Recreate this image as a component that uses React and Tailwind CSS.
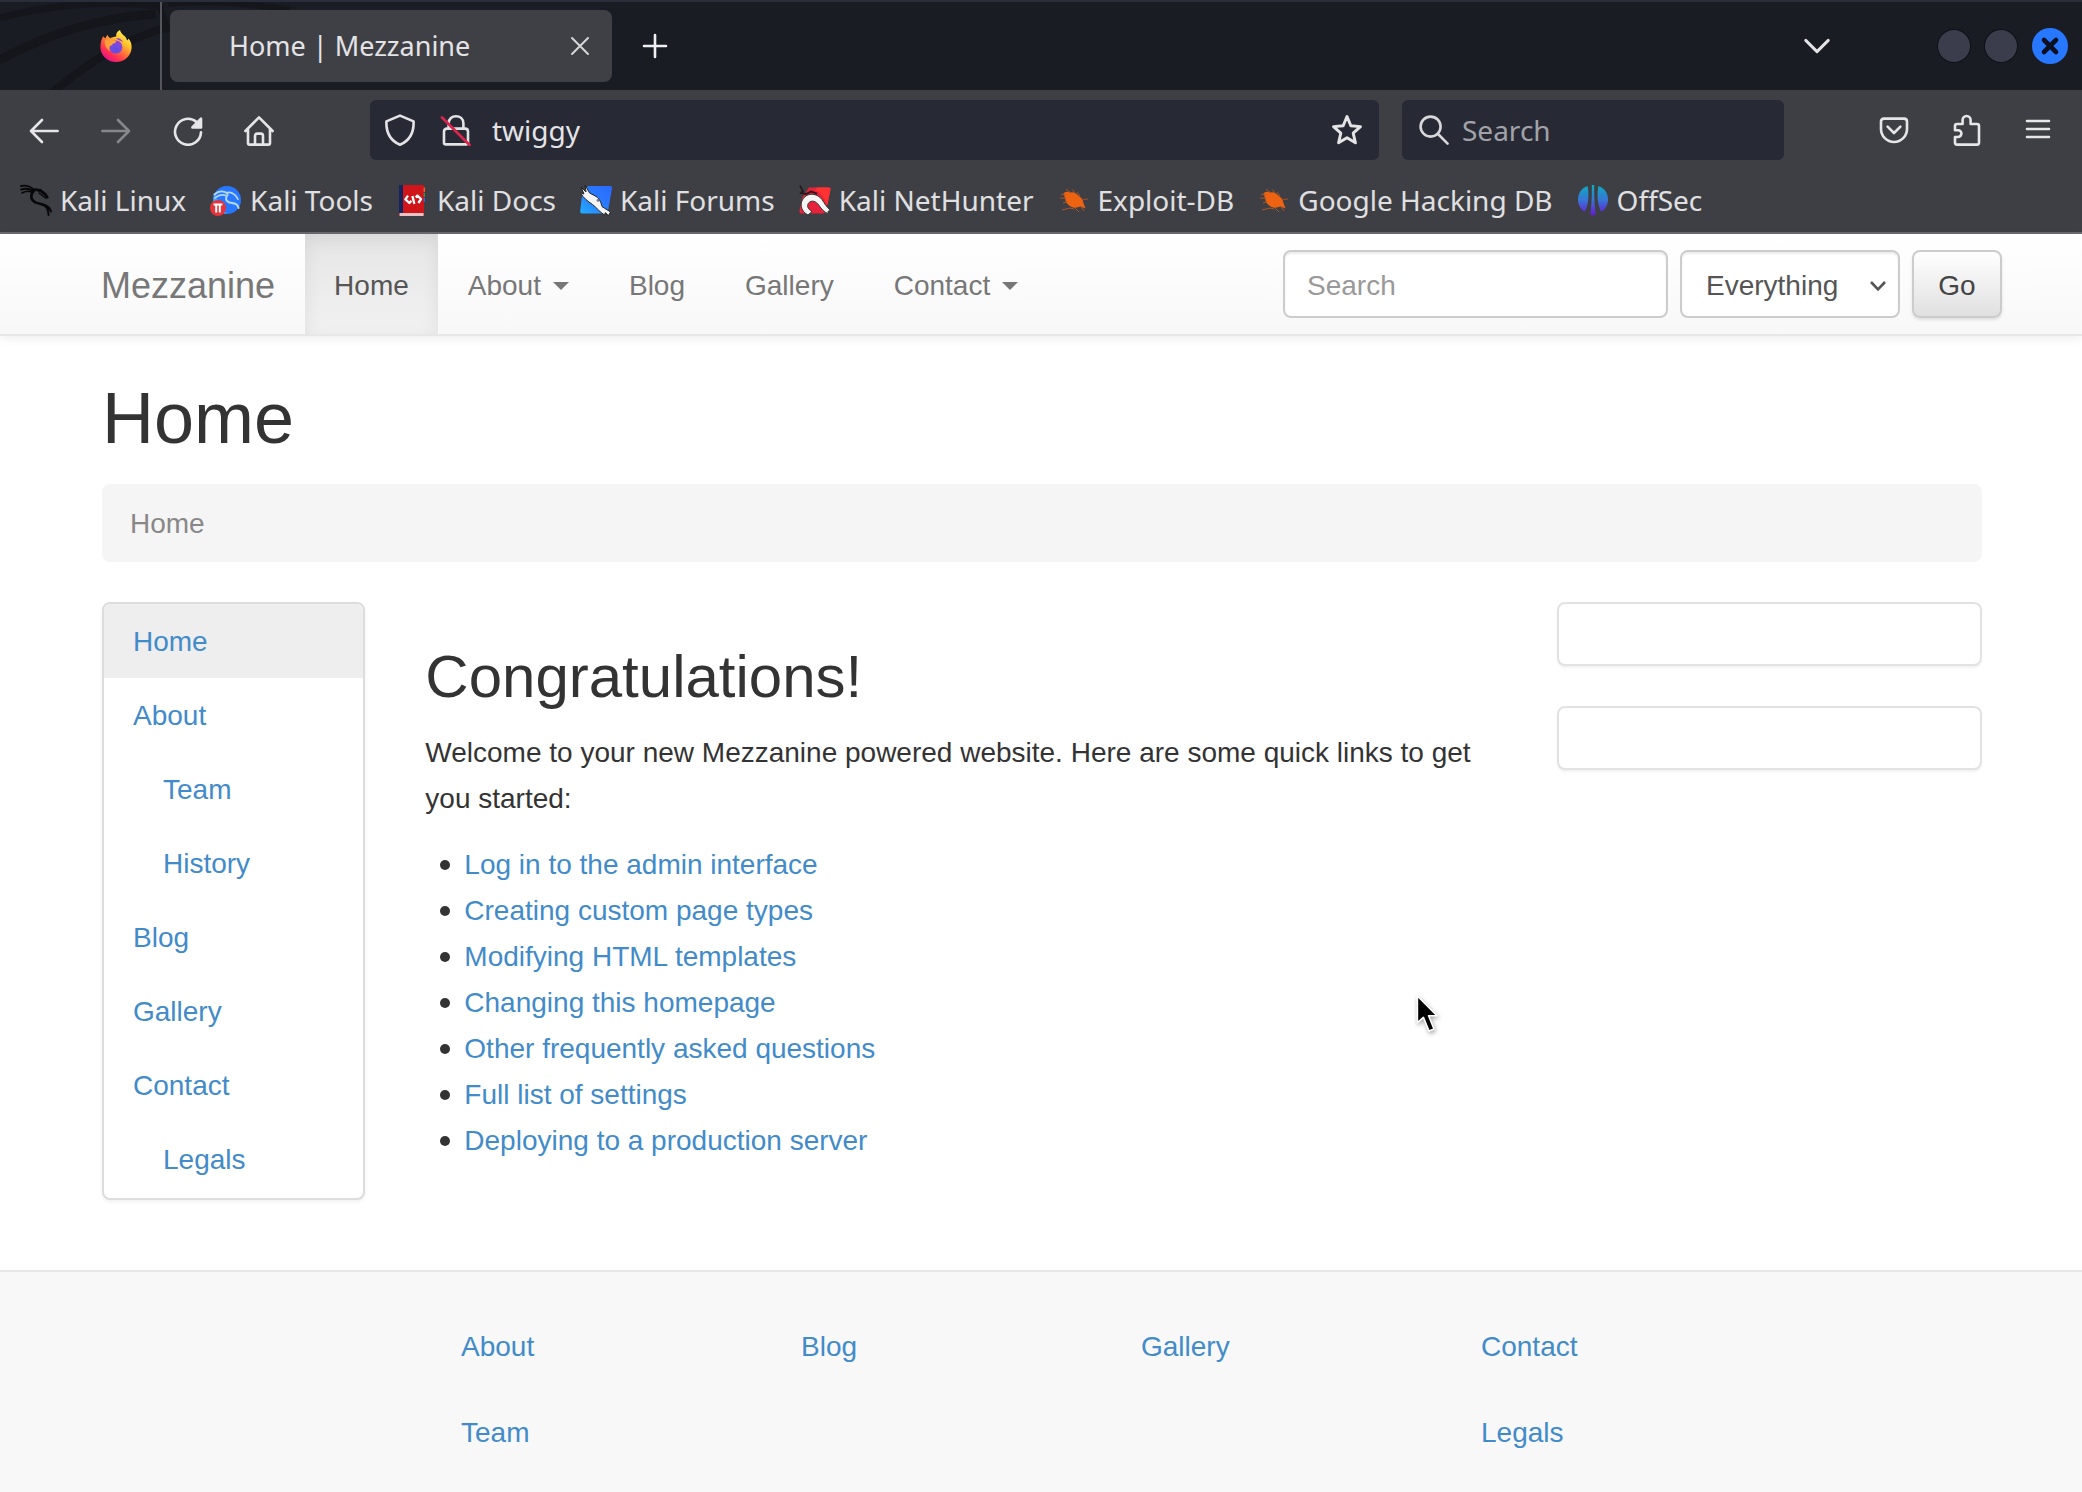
import React from "react";

const strokeProps = {
  fill: "none",
  stroke: "currentColor",
  strokeWidth: 2.6,
  strokeLinecap: "round",
  strokeLinejoin: "round",
};

function Icon({ children, className = "size-8", ...rest }) {
  return (
    <svg viewBox="0 0 32 32" className={className} aria-hidden="true" {...strokeProps} {...rest}>
      {children}
    </svg>
  );
}

function FirefoxLogo() {
  return (
    <svg viewBox="0 0 32 32" className="size-8" aria-hidden="true">
      <defs>
        <linearGradient id="fxBody" x1="0.85" y1="0.1" x2="0.25" y2="0.95">
          <stop offset="0" stopColor="#fff44f" />
          <stop offset="0.3" stopColor="#ffc22e" />
          <stop offset="0.55" stopColor="#ff7139" />
          <stop offset="0.8" stopColor="#ff2f55" />
          <stop offset="1" stopColor="#e5158a" />
        </linearGradient>
        <radialGradient id="fxCore" cx="0.5" cy="0.7" r="0.7">
          <stop offset="0" stopColor="#5b4fe0" />
          <stop offset="0.6" stopColor="#7a4be0" />
          <stop offset="1" stopColor="#a63ad0" />
        </radialGradient>
        <linearGradient id="fxHead" x1="0" y1="0" x2="1" y2="1">
          <stop offset="0" stopColor="#ff9640" />
          <stop offset="1" stopColor="#ffb02e" />
        </linearGradient>
      </defs>
      <path
        d="M3.2 6.2C3.8 7.2 4.6 7.8 5.6 8.2C6 6.8 6.8 5.6 7.8 5C8 6.4 8.8 7.4 10.2 8C12.5 7 14.6 6.8 16.2 6.4C15.8 3.8 17 1.6 20 0C20.4 2.6 22.6 4.4 25 6.4C26.2 7.6 26.8 9 27 10.4C27.8 10.2 28.2 9.4 28.4 8.6C30.6 11.2 32 14.4 31.6 18C31 26 24.4 32 16 32C7.4 32 .6 25.6 .4 17.2C.4 13.4 1.2 9.4 3.2 6.2Z"
        fill="url(#fxBody)"
      />
      <circle cx="15.8" cy="17" r="6.6" fill="url(#fxCore)" />
      <path
        d="M5 9.4C7.2 8.4 10.2 8.6 12.2 10.2C13.8 10.2 15.4 10.6 16.2 11.4C15.8 12.8 14 13.4 12.8 13.8C12.2 15 11.2 15.6 10 16C9 17.2 9 19.2 10.2 21C6.2 19 3.8 14 5 9.4Z"
        fill="url(#fxHead)"
      />
      <path d="M16 8.6C19 7.4 22 9.4 23 12.2C20.6 10.6 18 10.4 16 8.6Z" fill="#8f3fd6" />
    </svg>
  );
}

function DragonShape({ color }) {
  return (
    <g fill="none" stroke={color} strokeLinecap="round" strokeLinejoin="round">
      <path d="M1 2C6 1 10 2 14 6" strokeWidth="1.8" />
      <path d="M1 5.6C6 4 10 4.6 13 7.6" strokeWidth="1.8" />
      <path d="M2 9C6 6.6 10 7 13 9" strokeWidth="1.6" />
      <path d="M13 6C18 4.6 23 8 27 12.6" strokeWidth="2.6" />
      <path d="M20 5.4L26.4 10.4M19 9L25.6 14L28 13.4" strokeWidth="1.5" />
      <path d="M13.6 7.4C10 10.6 10.6 16 15.4 18.4C20.6 20.8 26.6 19.6 29.4 25" strokeWidth="2.6" />
      <path d="M22 20.6C26.4 21.6 28.4 26 28.6 31M28.8 23.6L31 27.4" strokeWidth="2" />
    </g>
  );
}

function KaliLinuxIcon() {
  return (
    <svg viewBox="0 0 32 32" className="size-8" aria-hidden="true">
      <DragonShape color="#08080a" />
    </svg>
  );
}

function KaliToolsIcon() {
  return (
    <svg viewBox="0 0 32 32" className="size-8" aria-hidden="true">
      <circle cx="17" cy="16" r="14" fill="#2777ff" />
      <path d="M5 9A14 14 0 0 0 17 30C12 25 8 18 5 9Z" fill="#3fa2f5" />
      <g fill="none" stroke="#b4d6fb" strokeLinecap="round">
        <path d="M4.4 10.4C9 6.4 14 6.8 17.4 9.6" strokeWidth="2" />
        <path d="M4.8 14C9 10.6 13 10.4 16 11.6" strokeWidth="1.6" />
        <path d="M17 8.6C22 7.4 26 11.4 28 15.4" strokeWidth="1.6" />
        <path d="M17.6 11C14 15.6 17.4 18.6 22 19C26 19.4 28 21 28.6 24" strokeWidth="2" />
      </g>
      <circle cx="8" cy="24" r="8" fill="#e5343c" />
      <path d="M3.6 20.6H12.4M6.2 21V28.6M9.8 21V28.6" fill="none" stroke="#fff" strokeWidth="2" />
    </svg>
  );
}

function KaliDocsIcon() {
  return (
    <svg viewBox="0 0 32 32" className="size-8" aria-hidden="true">
      <rect x="2" y="1" width="25" height="31" rx="1" fill="#cf1519" />
      <rect x="2" y="1" width="4" height="28" fill="#14245c" />
      <rect x="2.6" y="29" width="24" height="3" fill="#e9c3c3" />
      <path d="M26.6 3.6H28V8H26.6Z" fill="#e8642b" />
      <path d="M26.6 9H28V13H26.6Z" fill="#3b8f4a" />
      <path d="M26.6 14H28V18H26.6Z" fill="#2b6be0" />
      <path
        d="M11 11.6L8.4 15.4L12.4 19L14.4 16.8M15.4 12L17.4 20M18.6 13.4L20.4 11.6L24 15L21.4 19"
        fill="none"
        stroke="#fff"
        strokeWidth="2.3"
        strokeLinejoin="round"
      />
    </svg>
  );
}

function KaliForumsIcon() {
  return (
    <svg viewBox="0 0 32 32" className="size-8" aria-hidden="true">
      <defs>
        <linearGradient id="forumFill" x1="1" y1="0" x2="0" y2="1">
          <stop offset="0" stopColor="#2a68ff" />
          <stop offset="0.5" stopColor="#2a7cff" />
          <stop offset="1" stopColor="#23adff" />
        </linearGradient>
      </defs>
      <path d="M8 2H30Q32.4 2 32 4.4L28 27Q27.6 29.4 25 29.4H2Q0 29.4 .2 27L2 12Z" fill="url(#forumFill)" />
      <path
        d="M1 3L6 8L5 1L9.6 9L16 12.4C20 15 21 19 22 22.6L30.6 28L28.4 31.6L25.4 28.6L24.6 31C20 28.4 17 24 12.4 20.4C8 17.4 3 14 .6 8.6L4 10Z"
        fill="#f5f5f5"
        stroke="#222"
        strokeWidth="1"
      />
      <circle cx="18" cy="16.4" r="1.4" fill="#777" />
    </svg>
  );
}

function NetHunterIcon() {
  return (
    <svg viewBox="0 0 32 32" className="size-8" aria-hidden="true">
      <path d="M10 3.4H30Q32 3.4 31.4 5.8L27 27Q26.4 29.4 24 29.4H2Q0 29.4 .4 27L3 14Z" fill="#e8223a" />
      <path d="M18 3.4H30Q32 3.4 31.4 5.8L28.4 21C25 13 21 8 16 6Z" fill="#ff3232" />
      <path
        d="M9 31C1 27 0 18 6 12.6C11 8.4 19 10 23 15.6C25.4 19 27 22.6 31.4 26.4L29 27.4L29.4 29.6C25 28.4 22.6 25 20 21.4C17 17 12.6 16 10 18.6C7.6 21 8.4 25 13 27.6Z"
        fill="#f5f5f5"
        stroke="#333"
        strokeWidth="1"
      />
      <path d="M1 1.6L4 7L2 9L7 10L12 7.4L18 9.6" fill="none" stroke="#26181c" strokeWidth="1.8" />
    </svg>
  );
}

function ExploitIcon() {
  return (
    <svg viewBox="0 0 32 32" className="size-8" aria-hidden="true">
      <path
        d="M5.4 9.6C8 7 10.6 8 12 8.4C15.4 7.6 19.4 10 21.4 12.6C24 14 25 16.6 25.4 19L27.6 24.6L22.6 22.6C19 24 15 24.4 12 22C9 20.4 7.4 17.6 7 14Z"
        fill="#ee6311"
      />
      <path
        d="M8 5L13 9M14 5.4L18 10M19 8L22 12M25 15.4L30 15M2 14L8 14.4M3 10.6L8 11M5 19L9 18M4 26L12 24L16 25M17 24L21 28M23 22.6L26 27"
        fill="none"
        stroke="#a9552a"
        strokeWidth="1"
      />
    </svg>
  );
}

function OffSecIcon() {
  return (
    <svg viewBox="0 0 32 32" className="size-8" aria-hidden="true">
      <defs>
        <linearGradient id="offsecFill" gradientUnits="userSpaceOnUse" x1="16" y1="0" x2="16" y2="32">
          <stop offset="0" stopColor="#0bb0bd" />
          <stop offset="0.5" stopColor="#3776d6" />
          <stop offset="1" stopColor="#6a14d8" />
        </linearGradient>
      </defs>
      <g fill="url(#offsecFill)">
        <path d="M10.6 2C4 4 1 10 1 15.6C1 21 3.6 25.4 7.6 27.8C11.4 22 12.4 11 10.6 2Z" />
        <path d="M21.4 2C28 4 31 10 31 15.6C31 21 28.4 25.4 24.4 27.8C20.6 22 19.6 11 21.4 2Z" />
        <path d="M14.8 1H17.2C17 12 17.6 22 18.6 30Q16 33 13.4 30C14.4 22 15 12 14.8 1Z" />
      </g>
    </svg>
  );
}

const bookmarks = [
  ["Kali Linux", KaliLinuxIcon],
  ["Kali Tools", KaliToolsIcon],
  ["Kali Docs", KaliDocsIcon],
  ["Kali Forums", KaliForumsIcon],
  ["Kali NetHunter", NetHunterIcon],
  ["Exploit-DB", ExploitIcon],
  ["Google Hacking DB", ExploitIcon],
  ["OffSec", OffSecIcon],
];

function TabBar() {
  return (
    <div className="relative flex h-[90px] items-stretch border-t-2 border-[#2a2d3a] bg-[#1a1c24]">
      <svg
        viewBox="0 0 300 88"
        className="pointer-events-none absolute left-0 top-0 h-full w-[300px]"
        fill="none"
        stroke="#15161b"
        aria-hidden="true"
      >
        <path d="M0 16C50 2 110 -2 160 4" strokeWidth="7" />
        <path d="M-4 60C50 30 100 16 156 12" strokeWidth="9" />
        <path d="M50 92C90 60 120 40 164 26" strokeWidth="8" />
        <path d="M168 2C200 -2 240 0 290 8" strokeWidth="6" />
        <path d="M160 4L168 30" strokeWidth="6" />
      </svg>
      <div className="relative flex w-[162px] items-center justify-end border-r-2 border-[#55565b] pr-7">
        <button aria-label="Firefox View">
          <FirefoxLogo />
        </button>
      </div>
      <div className="relative my-2 ml-2 flex w-[442px] items-center justify-between rounded-lg bg-[#3f4045] pl-[59px] pr-4">
        <span className="text-[27px] leading-9 text-[#e4e4e6]">Home | Mezzanine</span>
        <button aria-label="Close tab" className="text-[#d6d6d8]">
          <Icon strokeWidth="2">
            <path d="M8 8L24 24M24 8L8 24" />
          </Icon>
        </button>
      </div>
      <button aria-label="New tab" className="relative flex w-[86px] items-center justify-center text-[#f0f0f2]">
        <Icon>
          <path d="M16 5V27M5 16H27" />
        </Icon>
      </button>
      <div className="ml-auto flex items-center gap-[15px] pr-[14px]">
        <button aria-label="List all tabs" className="mr-[88px] text-[#e4e4e6]">
          <Icon className="size-9">
            <path d="M6 11L16 21L26 11" />
          </Icon>
        </button>
        <button aria-label="Minimize" className="size-8 rounded-full bg-[#3b3d4c] ring-1 ring-[#101116]" />
        <button aria-label="Maximize" className="size-8 rounded-full bg-[#3b3d4c] ring-1 ring-[#101116]" />
        <button
          aria-label="Close window"
          className="flex size-9 items-center justify-center rounded-full bg-[#2777ff] text-[#0b1020]"
        >
          <Icon strokeWidth="4.6">
            <path d="M10 10L22 22M22 10L10 22" />
          </Icon>
        </button>
      </div>
    </div>
  );
}

function ToolButton({ label, dim, children }) {
  return (
    <button
      aria-label={label}
      className={
        dim
          ? "flex h-14 w-[72px] items-center justify-center text-[#86878b]"
          : "flex h-14 w-[72px] items-center justify-center text-[#e6e6e8]"
      }
    >
      <Icon>{children}</Icon>
    </button>
  );
}

function ToolBar() {
  return (
    <div className="flex items-center bg-[#3e3f44] px-2 pt-[10px]">
      <ToolButton label="Back">
        <path d="M29.6 17H3M14 6L3 17L14 28" />
      </ToolButton>
      <ToolButton label="Forward" dim>
        <path d="M2.4 17H29M18 6L29 17L18 28" />
      </ToolButton>
      <ToolButton label="Reload">
        <path d="M29 18.4A13 13 0 1 1 24.6 8" />
        <path d="M29 4.6V13.4H20.4Z" fill="currentColor" />
      </ToolButton>
      <ToolButton label="Home">
        <path d="M1.4 17L15 3.4L28.6 17M4 15V29Q4 30.6 5.6 30.6H24.4Q26 30.6 26 29V15" />
        <path d="M11 30V22Q11 19.6 13 19.6H17Q19 19.6 19 22V30" />
      </ToolButton>
      <div className="ml-[74px] flex h-[60px] flex-1 items-center rounded-md bg-[#272935] pl-[14px] pr-[14px] text-[#e4e4e6]">
        <Icon>
          <path d="M16 1.6L29.6 7.4C30 18 25.6 26.6 16 30.8C6.4 26.6 2 18 2.4 7.4Z" />
        </Icon>
        <Icon className="ml-6 size-8">
          <path d="M8.6 14V9.4C8.6 -.2 23.4 -.2 23.4 9.4V14M4 29V17.6Q4 14.6 7 14.6H25Q28 14.6 28 17.6V29Q28 30.4 26 30.4H6Q4 30.4 4 29Z" />
          <path d="M2 3.6L29.6 31" stroke="#d7264c" strokeWidth="2.8" />
        </Icon>
        <input
          aria-label="Address"
          defaultValue="twiggy"
          className="ml-5 min-w-0 flex-1 bg-transparent text-[28px] leading-9 outline-none"
        />
        <button aria-label="Bookmark this page">
          <Icon className="size-9">
            <path d="M16 4L19.4 12.2L28 13L21.5 18.8L23.5 27.4L16 22.9L8.5 27.4L10.5 18.8L4 13L12.6 12.2Z" />
          </Icon>
        </button>
      </div>
      <label className="ml-[23px] flex h-[60px] w-[382px] items-center rounded-md bg-[#272935] px-4 text-[#d8d8da]">
        <Icon>
          <circle cx="12.6" cy="12.6" r="10" />
          <path d="M20 20L29.6 29.6" />
        </Icon>
        <input
          aria-label="Search the web"
          placeholder="Search"
          className="ml-3 min-w-0 flex-1 bg-transparent text-[28px] leading-9 outline-none placeholder:text-[#a2a3a9]"
        />
      </label>
      <div className="ml-[74px] flex">
        <ToolButton label="Save to Pocket">
          <path d="M6 4.6H26Q29 4.6 29 7.6V15A13 13 0 0 1 3 15V7.6Q3 4.6 6 4.6ZM9.6 12.6L16 19L22.4 12.6" />
        </ToolButton>
        <ToolButton label="Extensions">
          <path d="M12.6 10V6A4 4 0 0 1 20.6 6V10H27Q29 10 29 12V28.8Q29 30.6 27 30.6H7Q5 30.6 5 28.8V23H8A3.4 3.4 0 0 0 8 16.2H5V12Q5 10 7 10Z" />
        </ToolButton>
        <ToolButton label="Application menu">
          <path d="M5 7H27M5 15H27M5 23H27" />
        </ToolButton>
      </div>
    </div>
  );
}

function BookmarksBar() {
  return (
    <nav
      aria-label="Bookmarks"
      className="flex h-[74px] items-center gap-6 border-b-2 border-[#6a6b70] bg-[#3e3f44] px-5 pt-2"
    >
      {bookmarks.map(([name, Logo]) => (
        <a key={name} href="#" className="flex items-center gap-2 whitespace-nowrap text-[28px] leading-9 text-[#e0e0e2]">
          <Logo />
          {name}
        </a>
      ))}
    </nav>
  );
}

function Caret() {
  return <span className="ml-3 border-x-8 border-t-8 border-x-transparent border-t-[#777]" />;
}

const navItems = [
  ["Home", false],
  ["About", true],
  ["Blog", false],
  ["Gallery", false],
  ["Contact", true],
];

function SiteNav() {
  return (
    <header className="flex h-[102px] items-stretch border-b-2 border-[#e7e7e7] bg-linear-to-b from-white to-[#f8f8f8] pl-[101px] pr-20 shadow-[0_2px_10px_rgba(0,0,0,0.08)]">
      <a href="#" className="mr-[30px] flex items-center pt-1 text-[36px] leading-10 text-[#777]">
        Mezzanine
      </a>
      <nav aria-label="Main" className="flex">
        {navItems.map(([name, menu]) => (
          <a
            key={name}
            href="#"
            className={
              name === "Home"
                ? "flex items-center bg-linear-to-b from-[#e6e6e6] to-[#f1f1f1] px-[29px] pt-1 text-[#555] shadow-[inset_0_6px_18px_rgba(0,0,0,0.075)]"
                : "flex items-center px-[30px] pt-1 text-[#777]"
            }
          >
            {name}
            {menu && <Caret />}
          </a>
        ))}
      </nav>
      <form className="ml-auto flex items-center gap-3" onSubmit={(e) => e.preventDefault()}>
        <input
          type="text"
          aria-label="Search the site"
          placeholder="Search"
          className="h-[68px] w-[385px] rounded-lg border-2 border-[#ccc] bg-white px-[22px] pt-1 shadow-[inset_0_2px_2px_rgba(0,0,0,0.075)] placeholder:text-[#999]"
        />
        <span className="relative flex">
          <select
            aria-label="Search in"
            className="h-[68px] w-[220px] appearance-none rounded-lg border-2 border-[#ccc] bg-white pl-6 pr-10 pt-1 text-[#555] shadow-[inset_0_2px_2px_rgba(0,0,0,0.075)]"
          >
            <option>Everything</option>
          </select>
          <svg
            viewBox="0 0 16 16"
            className="pointer-events-none absolute right-[14px] top-7 size-4"
            fill="none"
            stroke="#555"
            strokeWidth="2.6"
            aria-hidden="true"
          >
            <path d="M1 4L8 11.4L15 4" />
          </svg>
        </span>
        <button className="h-[68px] w-[90px] rounded-lg border-2 border-[#ccc] bg-linear-to-b from-white to-[#e0e0e0] pt-1 text-[#444] shadow-[0_2px_3px_rgba(0,0,0,0.1)]">
          Go
        </button>
      </form>
    </header>
  );
}

const tree = [
  ["Home", 0],
  ["About", 0],
  ["Team", 1],
  ["History", 1],
  ["Blog", 0],
  ["Gallery", 0],
  ["Contact", 0],
  ["Legals", 1],
];

const quickLinks = [
  "Log in to the admin interface",
  "Creating custom page types",
  "Modifying HTML templates",
  "Changing this homepage",
  "Other frequently asked questions",
  "Full list of settings",
  "Deploying to a production server",
];

function treeClass(name, depth) {
  if (name === "Home") return "flex h-[74px] items-center bg-[#eee] pl-[29px] pt-0.5";
  return depth ? "flex h-[74px] items-center pl-[59px] pt-0.5" : "flex h-[74px] items-center pl-[29px] pt-0.5";
}

function Content() {
  return (
    <main className="pl-[102px] pr-[100px] pt-[42px]">
      <h1 className="text-[72px] leading-[80px]">Home</h1>
      <ol className="mt-[26px] flex h-[78px] items-center rounded-lg bg-[#f5f5f5] px-7 pt-0.5 text-[#888]">
        <li>Home</li>
      </ol>
      <div className="mt-10 grid grid-cols-12 items-start gap-x-[60px]">
        <ul className="col-span-2 overflow-hidden rounded-lg border-2 border-[#ddd] bg-white pb-[2px] text-[#428bca] shadow-[0_2px_4px_rgba(0,0,0,0.06)]">
          {tree.map(([name, depth]) => (
            <li key={name}>
              <a href="#" className={treeClass(name, depth)}>
                {name}
              </a>
            </li>
          ))}
        </ul>
        <section className="col-span-7 pt-[42px]">
          <h2 className="text-[60px] leading-[66px]">Congratulations!</h2>
          <p className="mt-5 leading-[46px]">
            Welcome to your new Mezzanine powered website. Here are some quick links to get you started:
          </p>
          <ul className="mt-5 leading-[46px]">
            {quickLinks.map((link) => (
              <li key={link} className="flex items-center pl-[15px]">
                <span className="mr-[14px] size-[10px] rounded-full bg-[#333]" />
                <a href="#" className="text-[#428bca]">
                  {link}
                </a>
              </li>
            ))}
          </ul>
        </section>
        <aside className="col-span-3 flex flex-col gap-10">
          <div className="h-16 rounded-lg border-2 border-[#e2e2e2] bg-white shadow-[0_2px_2px_rgba(0,0,0,0.05)]" />
          <div className="h-16 rounded-lg border-2 border-[#e2e2e2] bg-white shadow-[0_2px_2px_rgba(0,0,0,0.05)]" />
        </aside>
      </div>
    </main>
  );
}

const footerColumns = [["About", "Team"], ["Blog"], ["Gallery"], ["Contact", "Legals"]];

function Footer() {
  return (
    <footer className="mt-[70px] grid flex-1 grid-cols-4 border-t-2 border-[#e7e7e7] bg-[#f8f8f8] pl-[461px] pr-[261px] pt-[52px] text-[#428bca]">
      {footerColumns.map((links) => (
        <ul key={links[0]} className="flex flex-col gap-10">
          {links.map((name) => (
            <li key={name} className="leading-[46px]">
              <a href="#">{name}</a>
            </li>
          ))}
        </ul>
      ))}
    </footer>
  );
}

function Pointer() {
  return (
    <svg
      viewBox="0 0 28 44"
      className="pointer-events-none absolute left-[1414px] top-[993px] h-11 w-7 drop-shadow-[1px_2px_2px_rgba(0,0,0,0.35)]"
      aria-hidden="true"
    >
      <path
        d="M3.4 3V29.6L9.4 24.4L15 38L20 36L14.6 22.8H23Z"
        fill="#000"
        stroke="#fff"
        strokeWidth="1.6"
        strokeLinejoin="round"
      />
    </svg>
  );
}

export default function App() {
  return (
    <div className="relative flex min-h-screen flex-col bg-white">
      <div className="font-['Noto_Sans',sans-serif]">
        <TabBar />
        <ToolBar />
        <BookmarksBar />
      </div>
      <div className="flex flex-1 flex-col font-['Liberation_Sans',Arial,sans-serif] text-[28px] leading-9 text-[#333]">
        <SiteNav />
        <Content />
        <Footer />
      </div>
      <Pointer />
    </div>
  );
}
